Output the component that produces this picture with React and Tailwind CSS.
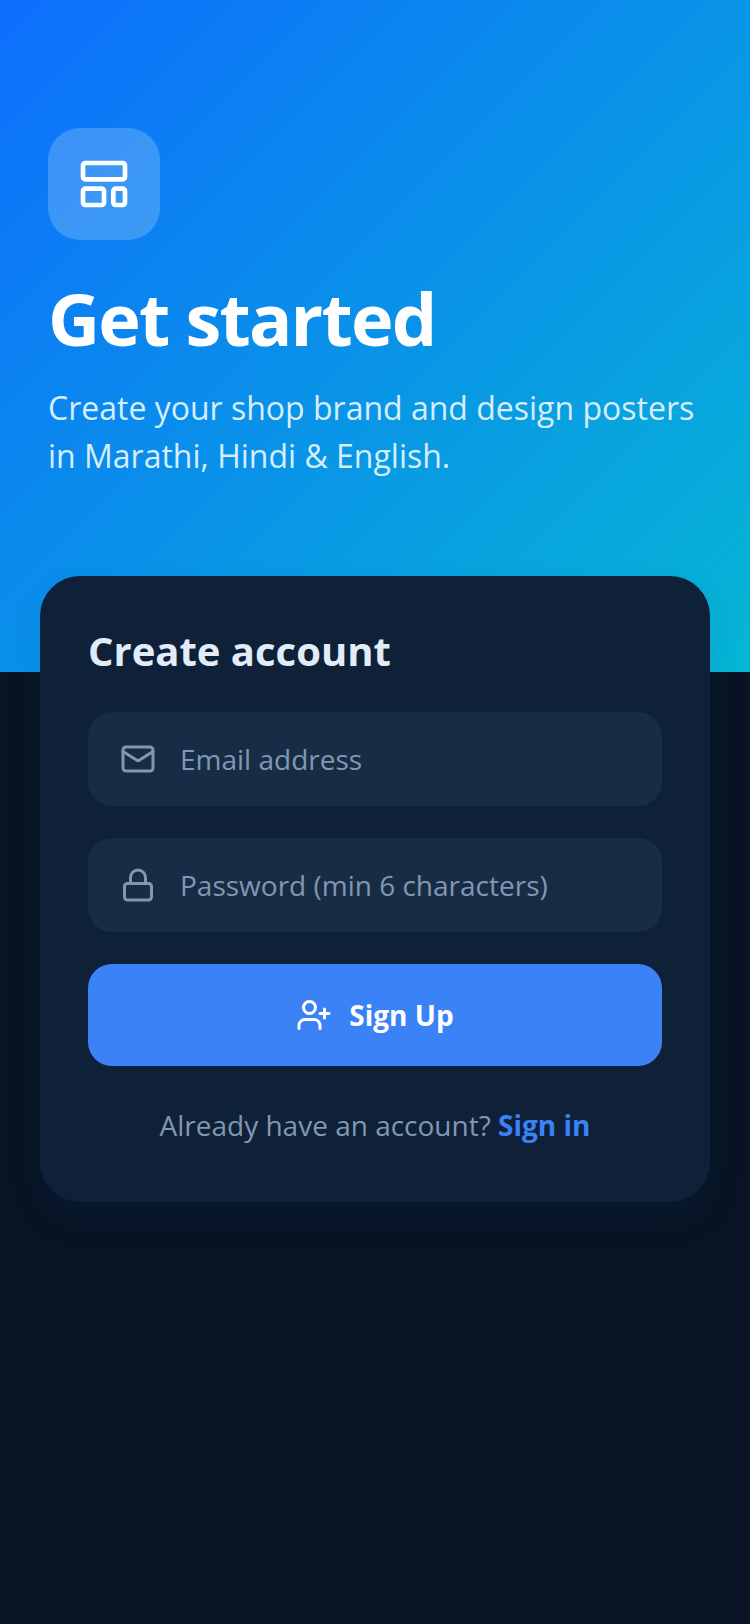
import React from 'react'
import { Mail, Lock, UserPlus, LayoutTemplate } from 'lucide-react'

const Field = ({ icon: Icon, placeholder }) => (
  <div className="flex items-center h-[94px] rounded-[24px] bg-[#172d45] pl-[32px]">
    <div className="w-[36px] flex justify-center">
      <Icon size={36} strokeWidth={2} className="text-[#8297b1]" />
    </div>
    <span className="ml-[24px] text-[28px] text-[#8297b1]">{placeholder}</span>
  </div>
)

export default function App() {
  return (
    <div className="min-h-[1624px] bg-[#081423] font-['Open_Sans',sans-serif]">
      <div className="h-[672px] bg-[linear-gradient(135deg,#0d6efd,#06b6d4)] pt-[128px] px-[48px]">
        <div className="w-[112px] h-[112px] rounded-[32px] bg-white/20 flex items-center justify-center">
          <LayoutTemplate size={56} strokeWidth={2} className="text-white" />
        </div>
        <h1 className="mt-[30px] text-[72px] leading-[96px] font-bold tracking-[-1.8px] text-white">Get started</h1>
        <p className="mt-[18px] text-[32px] leading-[48px] text-[#d6eefc]">
          Create your shop brand and design posters
          <br />
          in Marathi, Hindi &amp; English.
        </p>
      </div>

      <div className="mx-[40px] -mt-[96px] relative rounded-[40px] bg-[#0f2138] px-[48px] pt-[49px] pb-[57px] shadow-[0_16px_32px_rgba(13,60,140,0.12)]">
        <h2 className="text-[40px] leading-[52px] font-bold text-[#e2ecf9]">Create account</h2>
        <div className="mt-[35px] flex flex-col gap-[32px]">
          <Field icon={Mail} placeholder="Email address" />
          <Field icon={Lock} placeholder="Password (min 6 characters)" />
        </div>
        <button className="mt-[32px] w-full h-[102px] rounded-[24px] bg-[#3b82f6] flex items-center justify-center gap-[17px] text-white">
          <UserPlus size={36} strokeWidth={2} />
          <span className="text-[28px] font-bold">Sign Up</span>
        </button>
        <p className="mt-[39px] text-center text-[28px] leading-[40px] text-[#8297b1]">
          Already have an account? <span className="font-bold text-[#3b82f6]">Sign in</span>
        </p>
      </div>
    </div>
  )
}
